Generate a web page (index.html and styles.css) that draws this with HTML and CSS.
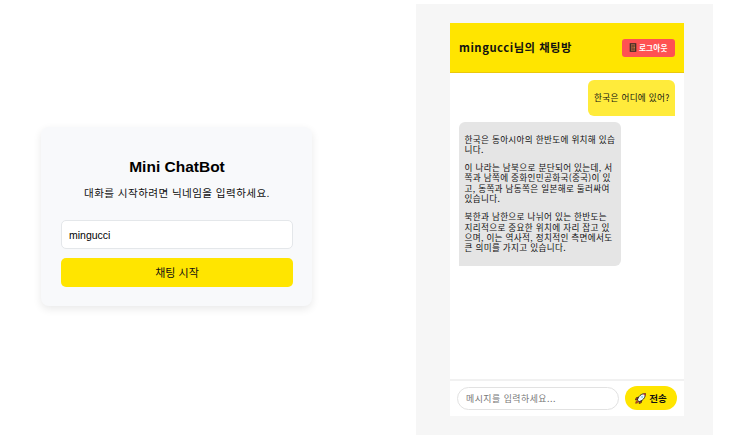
FILE: index.html
```html
<!DOCTYPE html>
<html lang="ko">
<head>
    <meta charset="UTF-8">
    <meta name="viewport" content="width=device-width, initial-scale=1.0">
    <title>Mini ChatBot</title>
    <link rel="stylesheet" href="styles.css">
</head>
<body>
    <main class="login">
        <h1>Mini ChatBot</h1>
        <p class="guide">대화를 시작하려면 닉네임을 입력하세요.</p>
        <input type="text" class="nickname" value="mingucci">
        <button class="start">채팅 시작</button>
    </main>

    <section class="stage">
        <div class="chat">
            <header class="chat-header">
                <h2>mingucci님의 채팅방</h2>
                <button class="logout">
                    <svg class="door" viewBox="0 0 8 9">
                        <rect x="0.7" y="0.2" width="6.6" height="8.6" fill="#3b2a24"/>
                        <rect x="1.9" y="1" width="4.2" height="7" fill="#98593a"/>
                        <path d="M2.8 2h2.4v2H2.8zM2.8 5.2h2.4v2H2.8z" fill="#7d4830"/>
                        <circle cx="5.5" cy="4.6" r="0.45" fill="#f5c842"/>
                    </svg>
                    <span>로그아웃</span>
                </button>
            </header>

            <div class="messages">
                <div class="message user">
                    <p>한국은 어디에 있어?</p>
                </div>
                <div class="message bot">
                    <p>한국은 동아시아의 한반도에 위치해 있습<br>니다.</p>
                    <p>이 나라는 남북으로 분단되어 있는데, 서<br>쪽과 남쪽에 중화인민공화국(중국)이 있<br>고, 동쪽과 남동쪽은 일본해로 둘러싸여<br>있습니다.</p>
                    <p>북한과 남한으로 나뉘어 있는 한반도는<br>지리적으로 중요한 위치에 자리 잡고 있<br>으며, 이는 역사적, 정치적인 측면에서도<br>큰 의미를 가지고 있습니다.</p>
                </div>
            </div>

            <footer class="chat-form">
                <input type="text" class="chat-input" placeholder="메시지를 입력하세요...">
                <button class="send">
                    <svg class="rocket" viewBox="0 0 12 12">
                        <path d="M3.8 4.6 1.3 5.2 0.5 7.6 3 7.3zM7.4 8.2 6.8 10.7 4.4 11.5 4.7 9z" fill="#e0403a" stroke="#111" stroke-width="0.7"/>
                        <path d="M2.6 8.2C1.4 8.6 0.8 9.8 0.7 11.3 2.2 11.2 3.4 10.6 3.8 9.4z" fill="#c9452e" stroke="#6b2416" stroke-width="0.6"/>
                        <path d="M11.4 0.6C8.4 0.5 5.8 1.8 4 4.3L2.5 7.5 4.5 9.5 7.7 8C10.2 6.2 11.5 3.6 11.4 0.6z" fill="#e9f8fb" stroke="#111" stroke-width="0.9"/>
                        <path d="M11.4 0.6C10.4 0.6 9.5 0.7 8.7 1L11 3.3C11.3 2.5 11.4 1.6 11.4 0.6z" fill="#d93a35"/>
                        <circle cx="7.7" cy="4.3" r="1" fill="#7cc4e8"/>
                    </svg>
                    <span>전송</span>
                </button>
            </footer>
        </div>
    </section>
</body>
</html>
```
FILE: styles.css
```css
* {
    box-sizing: border-box;
}
body {
    margin: 0;
    height: 439px;
    padding: 4px 37px 4px 41px;
    display: flex;
    align-items: flex-start;
    justify-content: space-between;
    background: white;
    color: #111;
    font-family: "Liberation Sans", "Noto Sans CJK KR", sans-serif;
    overflow: hidden;
}
h1, h2, p {
    margin: 0;
    white-space: nowrap;
}
input, button {
    display: block;
    margin: 0;
    padding: 0;
    border: none;
    font-family: inherit;
    color: inherit;
}
button {
    cursor: pointer;
}

/* Login card */
.login {
    width: 271px;
    height: 179px;
    margin-top: 123px;
    padding: 30px 19px 0 20px;
    border-radius: 8px;
    background: #f8f9fb;
    box-shadow: 0 3px 9px rgba(0, 0, 0, 0.09);
    text-align: center;
}
.login h1 {
    font-size: 15.5px;
    line-height: 20px;
    color: black;
}
.guide {
    margin-top: 7px;
    font-size: 10.6px;
    line-height: 18px;
    letter-spacing: 0.4px;
}
.nickname {
    width: 100%;
    height: 29px;
    margin-top: 18px;
    padding: 0 7px;
    border: 1px solid #e4e7ea;
    border-radius: 5px;
    background: white;
    font-size: 10.5px;
    color: black;
}
.start {
    width: 100%;
    height: 29px;
    margin-top: 9px;
    padding-bottom: 2px;
    border-radius: 5px;
    background: #ffe500;
    font-size: 11px;
}

/* Chat room */
.stage {
    width: 297px;
    height: 431px;
    padding: 19px 29.5px 19px 34px;
    background: #f6f6f6;
}
.chat {
    height: 393px;
    display: flex;
    flex-direction: column;
    background: white;
    font-family: "Noto Sans CJK KR", sans-serif;
}
.chat-header {
    height: 50px;
    padding: 0 8.5px 0 9px;
    display: flex;
    align-items: center;
    justify-content: space-between;
    background: #ffe500;
    border-bottom: 1.5px solid #ebc80c;
}
.chat-header h2 {
    font-size: 11.3px;
    font-weight: 700;
    letter-spacing: 0.52px;
    line-height: 16px;
    padding-bottom: 1px;
}
.logout {
    width: 53.5px;
    height: 18px;
    display: flex;
    align-items: center;
    justify-content: center;
    gap: 2px;
    border-radius: 3px;
    background: #ff5252;
    color: white;
    font-size: 7.6px;
    font-weight: 700;
    letter-spacing: 0.2px;
}
.door {
    width: 8px;
    height: 9px;
}
.messages {
    flex: 1;
    padding: 7px 8.5px 0 9px;
    display: flex;
    flex-direction: column;
    font-size: 8.6px;
    line-height: 10.35px;
    letter-spacing: 0.32px;
}
.message {
    padding: 12px 6px;
}
.user {
    align-self: flex-end;
    width: 87px;
    height: 36px;
    border-radius: 6px 6px 0 6px;
    background: #ffeb3b;
}
.bot {
    width: 162px;
    height: 144px;
    margin-top: 5.5px;
    padding-left: 5.5px;
    border-radius: 6px 6px 6px 0;
    background: #e5e5e5;
}
.bot p + p {
    margin-top: 7.8px;
}
.chat-form {
    height: 37px;
    padding: 0 6.5px 1px 7px;
    display: flex;
    align-items: center;
    gap: 6px;
    border-top: 2px solid #f1f1f1;
}
.chat-input {
    flex: 1;
    min-width: 0;
    height: 23px;
    padding: 0 8px;
    border: 1px solid #e2e2e2;
    border-radius: 12px;
    background: white;
    font-size: 8.9px;
    letter-spacing: 0.5px;
}
.chat-input::placeholder {
    color: #777;
}
.send {
    width: 52px;
    height: 24px;
    display: flex;
    align-items: center;
    justify-content: center;
    gap: 3px;
    border-radius: 12px;
    background: #ffe500;
    font-size: 9.5px;
    font-weight: 700;
}
.rocket {
    width: 11px;
    height: 11px;
}
```
